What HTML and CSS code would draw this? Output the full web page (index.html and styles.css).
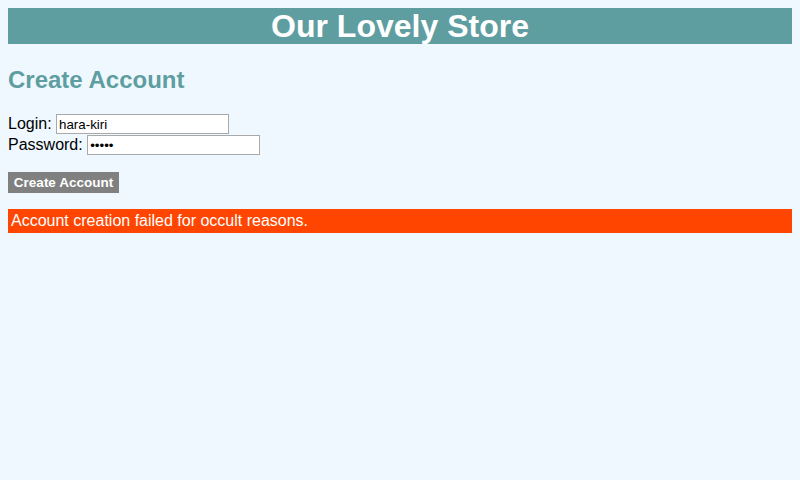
FILE: index.html
```html
<!DOCTYPE html>
<html>
<head>
<meta charset="utf-8">
<title>Our Lovely Store</title>
<link rel="stylesheet" href="styles.css">
</head>
<body>
<h1 class="banner">Our Lovely Store</h1>
<h2 class="title">Create Account</h2>
<form class="form">
  <div class="row"><label>Login:&nbsp;</label><input class="field" type="text" value="hara-kiri"></div>
  <div class="row"><label>Password:&nbsp;</label><input class="field" type="password" value="abcde"></div>
  <button class="submit" type="button">Create Account</button>
</form>
<div class="error">Account creation failed for occult reasons.</div>
</body>
</html>
```
FILE: styles.css
```css
html, body {
  background: #f0f8ff;
}
body {
  margin: 8px;
  font-family: "Liberation Sans", Arial, sans-serif;
  font-size: 16px;
  color: #000;
}
.banner {
  margin: 0;
  height: 36px;
  line-height: 36px;
  background: #5f9ea0;
  color: #fff;
  font-size: 32px;
  font-weight: bold;
  text-align: center;
}
.title {
  margin: 22px 0 21px;
  color: #5f9ea0;
  font-size: 24px;
  font-weight: bold;
  line-height: 27px;
}
.form {
  margin: 0;
}
.row {
  display: flex;
  align-items: baseline;
  height: 21px;
}
.field {
  box-sizing: border-box;
  width: 173px;
  height: 20px;
  margin: 0;
  padding: 1px 2px;
  border: 1px solid #a9a9a9;
  background: #fff;
  font-family: "Liberation Sans", Arial, sans-serif;
  font-size: 13.33px;
  color: #000;
}
.submit {
  display: block;
  margin: 16px 0 0;
  height: 21px;
  width: 111px;
  padding: 0;
  border: none;
  background: #808080;
  color: #fff;
  font-family: "Liberation Sans", Arial, sans-serif;
  font-size: 13.5px;
  font-weight: bold;
}
.error {
  margin-top: 16px;
  height: 24px;
  line-height: 24px;
  padding-left: 3px;
  background: #ff4500;
  color: #fff;
  font-size: 16px;
}
```
